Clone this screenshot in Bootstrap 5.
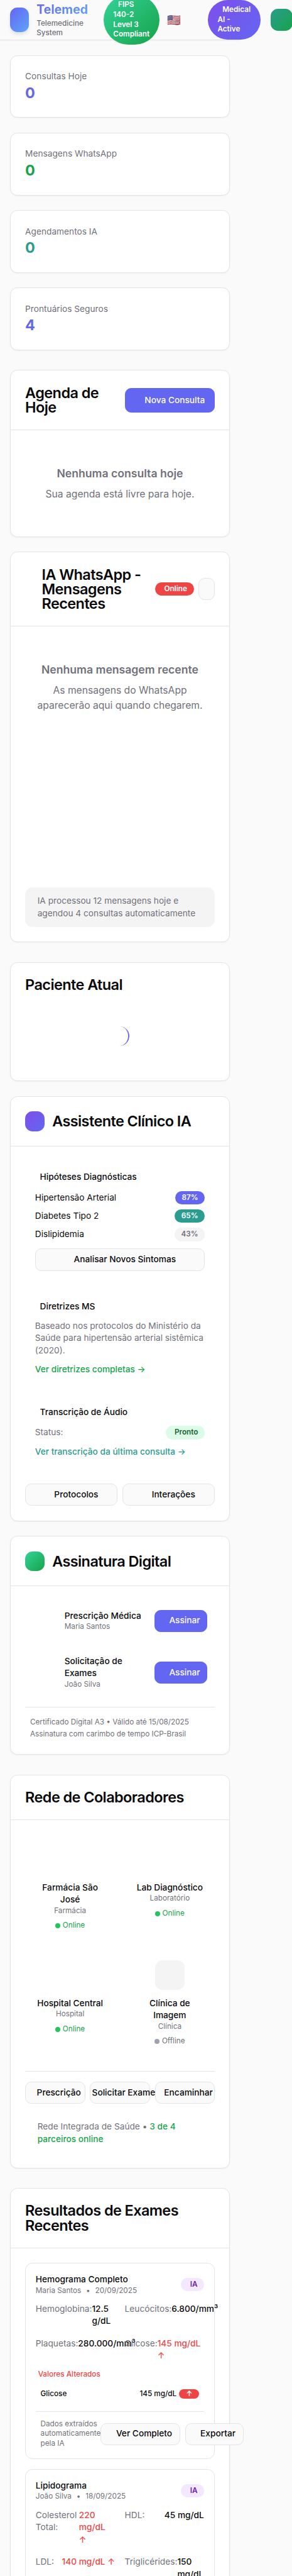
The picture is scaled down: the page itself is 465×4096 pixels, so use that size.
<!DOCTYPE html>
<html lang="pt-BR">
<head>
<meta charset="utf-8">
<meta name="viewport" content="width=device-width, initial-scale=1">
<title>Telemed</title>
<link href="https://cdn.jsdelivr.net/npm/bootstrap@5.3.0/dist/css/bootstrap.min.css" rel="stylesheet">
<style>
  html { font-size: 15.656px; }
  body { font-family: Inter, "Liberation Sans", sans-serif; background: #fafafa; color: #09090b; line-height: 1.5; height: 100vh; overflow: hidden; }
  .page { width: 24.4rem; }
  .t-xs { font-size: .75rem; line-height: 1rem; }
  .t-sm { font-size: .875rem; line-height: 1.25rem; }
  .t-lg { font-size: 1.125rem; line-height: 1.75rem; }
  .soft { color: #71717a; }
  .c-primary { color: #6366f1; } .c-green { color: #16a34a; } .c-teal { color: #2a9d8f; } .c-red { color: #ef4444; }
  .fw-med { font-weight: 500; }

  .topbar { height: 4.09rem; border-bottom: 1px solid #e4e4e7; box-shadow: 0 1px 2px rgba(0,0,0,.04); padding-left: 1rem; }
  .logo { width: 1.95rem; height: 2.5rem; border-radius: .75rem; background: linear-gradient(135deg, #6366f1, #60a5fa); box-shadow: 0 4px 6px -1px rgba(0,0,0,.12); margin-right: .77rem; }
  .brand { width: 6.8rem; }
  .brand h1 { font-size: 1.25rem; line-height: 1.75rem; font-weight: 700; margin: 0; width: max-content; background: linear-gradient(135deg, #6366f1, #60a5fa); -webkit-background-clip: text; background-clip: text; color: transparent; }
  .seal { border-radius: 10rem; padding: .5rem 1rem; color: #fff; font-weight: 600; text-indent: .5rem; }
  .seal-rest { text-indent: 0; }
  .seal-fips { width: 5.7rem; background: linear-gradient(135deg, #34d399, #16a34a); margin-right: .75rem; }
  .seal-ai { width: 5.38rem; background: linear-gradient(135deg, #7e4fec, #6366f1); margin-right: 1rem; }
  .flag { font-size: 1.125rem; line-height: 1.75rem; width: 4.16rem; }
  .avatar { width: 2.25rem; height: 2.25rem; border-radius: .75rem; background: linear-gradient(135deg, #2a9d8f, #16a34a); }

  .card { --bs-card-border-color: #e4e4e7; --bs-card-border-radius: .75rem; --bs-card-inner-border-radius: .7rem; --bs-card-spacer-x: 1.5rem; --bs-card-spacer-y: 1.5rem; --bs-card-bg: #fff; --bs-card-color: #09090b; box-shadow: 0 1px 2px rgba(0,0,0,.05); flex: none; }
  .card-header { background: transparent; padding: 1.5rem; border-bottom: 1px solid #e4e4e7; }
  .card h2 { font-size: 1.5rem; line-height: 1.5rem; font-weight: 600; letter-spacing: -.025em; margin: 0; }
  .figure-num { font-size: 1.5rem; line-height: 2rem; font-weight: 700; }
  .tile { width: 2rem; height: 2rem; border-radius: .75rem; }
  .tile-ai { background: linear-gradient(135deg, #7e4fec, #6366f1); }
  .tile-sign { background: linear-gradient(135deg, #34d399, #16a34a); }

  .btn { --bs-btn-font-size: .875rem; --bs-btn-line-height: 1.25rem; --bs-btn-font-weight: 500; --bs-btn-border-radius: .625rem; --bs-btn-border-width: 1px; height: 2.25rem; padding: 0 .75rem; display: flex; align-items: center; justify-content: center; white-space: nowrap; }
  .btn-primary { --bs-btn-bg: #6366f1; --bs-btn-border-color: #6366f1; }
  .btn-soft { --bs-btn-bg: #fafafa; --bs-btn-border-color: #e4e4e7; --bs-btn-color: #09090b; }
  .btn-new { height: 2.5rem; width: 9.125rem; padding: 0 1rem 0 2rem; margin-left: auto; }
  .btn-dot { width: 1.625rem; padding: 0; }
  .btn-sign { width: 5.375rem; padding: 0 .69rem 0 1.44rem; }
  .btn-file { padding-left: 1.5rem; }
  .ico-l { padding-left: 1.75rem; }
  .btn-tri { padding: 0 0 0 .75rem; min-width: 0; flex: 1 1 0; }
  .chip { height: 1.375rem; border-radius: 1rem; padding: 0 .69rem; font-size: .75rem; line-height: 1.375rem; font-weight: 600; flex: none; }
  .chip-ico { padding-left: .92rem; }
  .chip-primary { background: #6366f1; color: #fff; }
  .chip-teal { background: #2a9d8f; color: #fff; }
  .chip-gray { background: #f4f4f5; color: #71717a; }
  .chip-red { background: #ef4444; color: #fff; }
  .chip-ready { background: #dcfce7; color: #166534; }
  .chip-ia { background: #f3e8ff; color: #6b21a8; }
  .up-mark { background: #ef4444; color: #fff; width: 2.0625rem; }
  .note { border-radius: .75rem; padding: .75rem 1.25rem; }
  .note-fill { background: #f4f4f5; }
  .wa-title { padding-left: 1.6875rem; }
  .empty { text-align: center; padding: 2rem 0; color: #71717a; }
  .empty-tall { min-height: 24rem; }
  .patient { height: 12.125rem; }
  .patient-load { padding-top: 3.5rem; }
  .spin-arc { width: 2rem; height: 2rem; border-radius: 50%; border-right: 2px solid #6366f1; transform: rotate(4deg); }
  .panel { padding: 1rem; }
  .panel h3 { font-size: .875rem; line-height: 1.25rem; font-weight: 500; margin: 0 0 .75rem; padding-left: .5rem; }
  .linkline { margin-top: .5rem; height: 1.5rem; padding-top: .19rem; }
  .gap-top { margin-top: .75rem; }
  .rule { border-top: 1px solid #e4e4e7; }
  .doc { padding: .875rem .75rem .75rem 4rem; }
  .partners { display: grid; grid-template-columns: 1fr 1fr; gap: 1rem; text-align: center; }
  .partner { padding: 1rem; }
  .partner-ico { width: 3rem; height: 3rem; border-radius: .75rem; margin: 0 auto .75rem; }
  .dot { width: .5rem; height: .5rem; border-radius: 50%; background: #22c55e; }
  .dot-off { background: #9ca3af; }
  .exam { border: 1px solid #e4e4e7; border-radius: .75rem; padding: 1rem; }
  .exam-grid { display: grid; grid-template-columns: 8.0625rem 8.0625rem; gap: 1rem; margin-top: .75rem; }
  .exam-foot { margin-top: .75rem; padding-top: .75rem; }
</style>
</head>
<body>
<header class="page topbar d-flex align-items-center">
  <div class="logo flex-shrink-0"></div>
  <div class="brand flex-shrink-0">
    <h1>Telemed</h1>
    <div class="t-xs soft fw-med">Telemedicine<br>System</div>
  </div>
  <div class="seal seal-fips t-xs flex-shrink-0">FIPS<div class="seal-rest">140-2<br>Level 3<br>Compliant</div></div>
  <div class="flag flex-shrink-0">🇺🇸</div>
  <div class="seal seal-ai t-xs flex-shrink-0">Medical<div class="seal-rest">AI -<br>Active</div></div>
  <div class="avatar flex-shrink-0"></div>
</header>

<main class="page px-3 pt-4 d-flex flex-column">
  <section class="d-flex flex-column gap-4 mb-4 pb-2">
    <div class="card"><div class="card-body"><div class="t-sm soft">Consultas Hoje</div><div class="figure-num c-primary">0</div></div></div>
    <div class="card"><div class="card-body"><div class="t-sm soft">Mensagens WhatsApp</div><div class="figure-num c-green">0</div></div></div>
    <div class="card"><div class="card-body"><div class="t-sm soft">Agendamentos IA</div><div class="figure-num c-teal">0</div></div></div>
    <div class="card"><div class="card-body"><div class="t-sm soft">Prontuários Seguros</div><div class="figure-num c-primary">4</div></div></div>
  </section>

  <section class="card mb-4">
    <div class="card-header d-flex align-items-center">
      <h2>Agenda de<br>Hoje</h2>
      <button class="btn btn-primary btn-new">Nova Consulta</button>
    </div>
    <div class="card-body">
      <div class="empty">
        <div class="t-lg fw-semibold mb-2">Nenhuma consulta hoje</div>
        <div>Sua agenda está livre para hoje.</div>
      </div>
    </div>
  </section>

  <section class="card mb-4">
    <div class="card-header d-flex align-items-center">
      <h2 class="wa-title me-auto">IA WhatsApp -<br>Mensagens<br>Recentes</h2>
      <span class="chip chip-ico chip-red me-2">Online</span>
      <button class="btn btn-soft btn-dot" aria-label="Abrir"></button>
    </div>
    <div class="card-body">
      <div class="empty empty-tall">
        <div class="t-lg fw-semibold mb-2">Nenhuma mensagem recente</div>
        <div>As mensagens do WhatsApp<br>aparecerão aqui quando chegarem.</div>
      </div>
      <div class="note note-fill t-sm soft mt-3">IA processou 12 mensagens hoje e<br>agendou 4 consultas automaticamente</div>
    </div>
  </section>

  <section class="card patient mb-4 mt-2">
    <div class="card-body">
      <h2>Paciente Atual</h2>
      <div class="patient-load d-flex justify-content-center"><div class="spin-arc" role="status"></div></div>
    </div>
  </section>

  <section class="card mb-4">
    <div class="card-header d-flex align-items-center">
      <div class="tile tile-ai me-2"></div><h2 class="ms-1">Assistente Clínico IA</h2>
    </div>
    <div class="card-body">
      <div class="panel mb-3">
        <h3>Hipóteses Diagnósticas</h3>
        <div class="d-flex flex-column gap-2 t-sm">
          <div class="d-flex justify-content-between align-items-center"><span>Hipertensão Arterial</span><span class="chip chip-primary">87%</span></div>
          <div class="d-flex justify-content-between align-items-center"><span>Diabetes Tipo 2</span><span class="chip chip-teal">65%</span></div>
          <div class="d-flex justify-content-between align-items-center"><span>Dislipidemia</span><span class="chip chip-gray">43%</span></div>
        </div>
        <button class="btn btn-soft w-100 ico-l gap-top">Analisar Novos Sintomas</button>
      </div>
      <div class="panel mb-3">
        <h3>Diretrizes MS</h3>
        <div class="t-sm soft text-nowrap">Baseado nos protocolos do Ministério da<br>Saúde para hipertensão arterial sistêmica<br>(2020).</div>
        <div class="linkline t-sm fw-med c-green">Ver diretrizes completas →</div>
      </div>
      <div class="panel">
        <h3>Transcrição de Áudio</h3>
        <div class="d-flex justify-content-between align-items-center t-sm"><span class="soft">Status:</span><span class="chip chip-ico chip-ready">Pronto</span></div>
        <div class="linkline t-sm fw-med c-teal">Ver transcrição da última consulta →</div>
      </div>
      <div class="d-flex gap-2 mt-4">
        <button class="btn btn-soft flex-fill w-50 ico-l">Protocolos</button>
        <button class="btn btn-soft flex-fill w-50 ico-l">Interações</button>
      </div>
    </div>
  </section>

  <section class="card mb-4">
    <div class="card-header d-flex align-items-center">
      <div class="tile tile-sign me-2"></div><h2 class="ms-1">Assinatura Digital</h2>
    </div>
    <div class="card-body">
      <div class="doc d-flex justify-content-between align-items-center">
        <div><div class="t-sm fw-med">Prescrição Médica</div><div class="t-xs soft">Maria Santos</div></div>
        <button class="btn btn-primary btn-sign">Assinar</button>
      </div>
      <div class="doc gap-top d-flex justify-content-between align-items-center">
        <div><div class="t-sm fw-med">Solicitação de<br>Exames</div><div class="t-xs soft">João Silva</div></div>
        <button class="btn btn-primary btn-sign">Assinar</button>
      </div>
      <div class="rule t-xs soft mt-3 pt-3 ps-2">
        <div class="mb-1">Certificado Digital A3 • Válido até 15/08/2025</div>
        <div>Assinatura com carimbo de tempo ICP-Brasil</div>
      </div>
    </div>
  </section>

  <section class="card mb-4 mt-2">
    <div class="card-header"><h2>Rede de Colaboradores</h2></div>
    <div class="card-body">
      <div class="partners">
        <div class="partner"><div class="partner-ico"></div><div class="t-sm fw-med">Farmácia São José</div><div class="t-xs soft">Farmácia</div>
          <div class="d-flex justify-content-center align-items-center gap-1 mt-2 t-xs c-green"><span class="dot"></span>Online</div></div>
        <div class="partner px-0"><div class="partner-ico"></div><div class="t-sm fw-med">Lab Diagnóstico</div><div class="t-xs soft">Laboratório</div>
          <div class="d-flex justify-content-center align-items-center gap-1 mt-2 t-xs c-green"><span class="dot"></span>Online</div></div>
        <div class="partner px-0"><div class="partner-ico"></div><div class="t-sm fw-med">Hospital Central</div><div class="t-xs soft">Hospital</div>
          <div class="d-flex justify-content-center align-items-center gap-1 mt-2 t-xs c-green"><span class="dot"></span>Online</div></div>
        <div class="partner"><div class="partner-ico note-fill"></div><div class="t-sm fw-med">Clínica de<br>Imagem</div><div class="t-xs soft">Clínica</div>
          <div class="d-flex justify-content-center align-items-center gap-1 mt-2 t-xs soft"><span class="dot dot-off"></span>Offline</div></div>
      </div>
      <div class="rule mt-4 pt-3 d-flex gap-2">
        <button class="btn btn-soft btn-tri">Prescrição</button>
        <button class="btn btn-soft btn-tri">Solicitar Exame</button>
        <button class="btn btn-soft btn-tri">Encaminhar</button>
      </div>
      <div class="note t-sm soft mt-3">Rede Integrada de Saúde • <span class="fw-med c-green">3 de 4 parceiros online</span></div>
    </div>
  </section>

  <section class="card mt-2">
    <div class="card-header"><h2>Resultados de Exames Recentes</h2></div>
    <div class="card-body">
      <article class="exam mb-3">
        <div class="d-flex justify-content-between align-items-center">
          <div><div class="t-sm fw-med">Hemograma Completo</div><div class="t-xs soft d-flex gap-2"><span>Maria Santos</span><span>•</span><span>20/09/2025</span></div></div>
          <span class="chip chip-ico chip-ia">IA</span>
        </div>
        <div class="exam-grid t-sm">
          <div class="d-flex justify-content-between"><span class="soft">Hemoglobina:</span><span class="fw-med">12.5 g/dL</span></div>
          <div class="d-flex justify-content-between"><span class="soft">Leucócitos:</span><span class="fw-med">6.800/mm³</span></div>
          <div class="d-flex justify-content-between"><span class="soft">Plaquetas:</span><span class="fw-med">280.000/mm³</span></div>
          <div class="d-flex justify-content-between"><span class="soft">Glicose:</span><span class="fw-med c-red">145 mg/dL ↑</span></div>
        </div>
        <div class="t-xs fw-med c-red ps-1 gap-top">Valores Alterados</div>
        <div class="d-flex align-items-center t-xs fw-med p-2 mt-2">
          <span class="me-auto">Glicose</span><span class="me-1">145 mg/dL</span>
          <span class="up-mark fw-semibold text-center rounded-pill">↑</span>
        </div>
        <div class="rule exam-foot d-flex align-items-center justify-content-between">
          <div class="t-xs soft ps-2">Dados extraídos automaticamente pela IA</div>
          <div class="d-flex gap-2">
            <button class="btn btn-soft btn-file">Ver Completo</button>
            <button class="btn btn-soft btn-file">Exportar</button>
          </div>
        </div>
      </article>
      <article class="exam">
        <div class="d-flex justify-content-between align-items-center">
          <div><div class="t-sm fw-med">Lipidograma</div><div class="t-xs soft d-flex gap-2"><span>João Silva</span><span>•</span><span>18/09/2025</span></div></div>
          <span class="chip chip-ico chip-ia">IA</span>
        </div>
        <div class="exam-grid t-sm">
          <div class="d-flex justify-content-between"><span class="soft">Colesterol Total:</span><span class="fw-med c-red">220 mg/dL ↑</span></div>
          <div class="d-flex justify-content-between"><span class="soft">HDL:</span><span class="fw-med">45 mg/dL</span></div>
          <div class="d-flex justify-content-between"><span class="soft">LDL:</span><span class="fw-med c-red">140 mg/dL ↑</span></div>
          <div class="d-flex justify-content-between"><span class="soft">Triglicérides:</span><span class="fw-med">150 mg/dL</span></div>
        </div>
      </article>
    </div>
  </section>
</main>
<script src="https://cdn.jsdelivr.net/npm/bootstrap@5.3.0/dist/js/bootstrap.bundle.min.js"></script>
</body>
</html>
